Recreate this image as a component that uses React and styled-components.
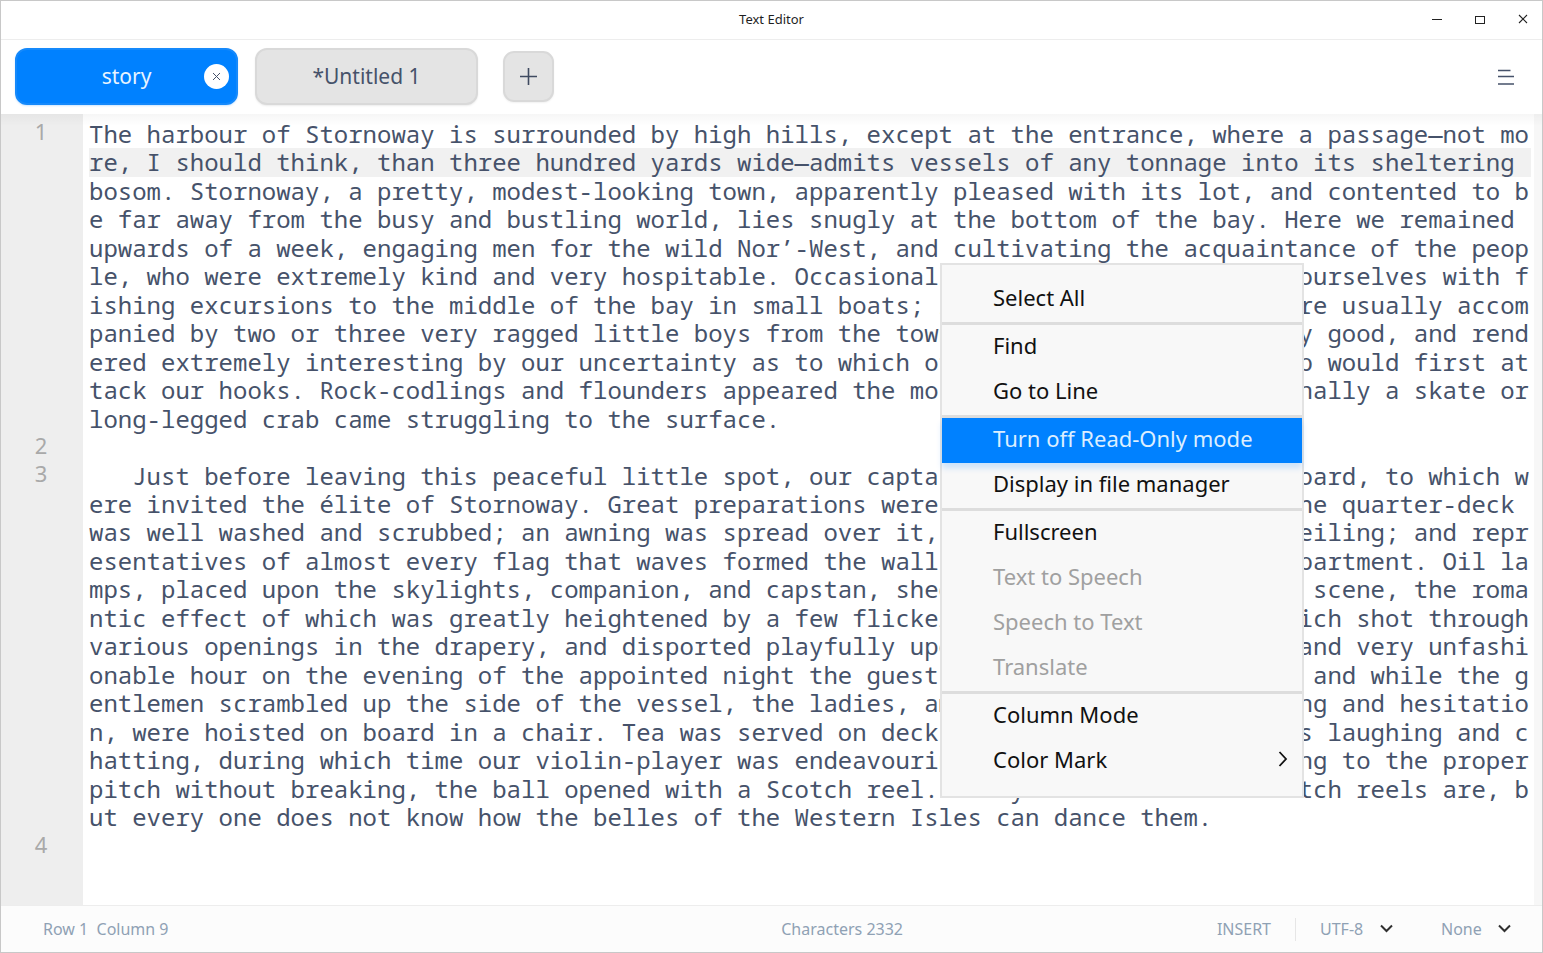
import React from "react";
import styled, { createGlobalStyle } from "styled-components";

const GlobalStyle = createGlobalStyle`
  *, *::before, *::after { box-sizing: border-box; }
  body {
    margin: 0;
    background: #ffffff;
    font-family: "Noto Sans", sans-serif;
  }
  button, select { font-family: inherit; margin: 0; }
`;

const Window = styled.div`
  position: relative;
  display: flex;
  flex-direction: column;
  min-height: 100vh;
  border: 1px solid #c8c8c8;
  background: #ffffff;
`;

const TitleBar = styled.header`
  display: grid;
  grid-template-columns: 1fr auto 1fr;
  align-items: center;
  height: 39px;
  border-bottom: 1px solid #ededed;
`;

const Title = styled.h1`
  grid-column: 2;
  margin: 0;
  padding-bottom: 2px;
  font-size: 13px;
  font-weight: 400;
  line-height: 16px;
  color: #1f1f1f;
`;

const WindowControls = styled.div`
  display: flex;
  justify-content: flex-end;
  gap: 19px;
  padding-right: 7px;
`;

const IconButton = styled.button`
  display: flex;
  align-items: center;
  justify-content: center;
  width: ${(p) => p.$size}px;
  height: ${(p) => p.$size}px;
  padding: 0;
  border: 0;
  background: transparent;
  color: ${(p) => p.$color || "#222222"};
`;

const TabBar = styled.nav`
  display: flex;
  align-items: center;
  height: 74px;
  padding: 0 23px 2px 14px;
`;

const TabSlot = styled.div`
  position: relative;
  width: 223px;
  margin-right: 17px;
`;

const Tab = styled.button`
  display: block;
  width: 100%;
  height: 57px;
  padding: 0;
  border: 2px solid ${(p) => (p.$active ? "#1589fb" : "#d9d9d9")};
  border-radius: 12px;
  background: ${(p) => (p.$active ? "#0081ff" : "#e4e4e4")};
  box-shadow: 0 1px 2px ${(p) => (p.$active ? "#0081ff33" : "#00000014")};
  color: ${(p) => (p.$active ? "#e8f4ff" : "#46526a")};
  font-size: 21px;
  line-height: 28px;
`;

const TabClose = styled.button`
  position: absolute;
  top: 16px;
  right: 9px;
  display: flex;
  align-items: center;
  justify-content: center;
  width: 25px;
  height: 25px;
  padding: 0;
  border: 0;
  border-radius: 50%;
  background: #ffffff;
  color: #46526a;
`;

const AddTab = styled.button`
  display: flex;
  align-items: center;
  justify-content: center;
  width: 51px;
  height: 51px;
  margin-left: 8px;
  margin-right: auto;
  padding: 0;
  border: 2px solid #d9d9d9;
  border-radius: 11px;
  background: #e4e4e4;
  box-shadow: 0 1px 2px #0000000f;
  color: #3f4a60;
`;

const Editor = styled.main`
  position: relative;
  flex: 1;
  display: grid;
  grid-template-columns: 82px 1fr 8px;
  background: #ffffff;
`;

const TopShade = styled.div`
  position: absolute;
  inset: 0 0 auto 0;
  height: 12px;
  background: linear-gradient(#00000009, #00000000);
  pointer-events: none;
`;

const Rows = styled.div`
  display: grid;
  grid-auto-rows: minmax(28px, 1fr);
  line-height: 28px;
`;

const Gutter = styled(Rows)`
  padding: 3px 0 47px;
  background: #eeeeee;
  color: #a9a9a9;
  font-size: 22px;
  text-align: center;
`;

const GutterCell = styled.span`
  padding-right: 2px;
`;

const Page = styled(Rows)`
  isolation: isolate;
  padding: 6px 3px 45px 6px;
  color: #46526a;
  font-family: "Noto Sans Mono", "Noto Mono", "DejaVu Sans Mono", "Liberation Mono", monospace;
  font-size: 24px;
  white-space: pre;
`;

/* The current line sits one layer down, so its band never covers the descenders above it. */
const Line = styled.div`
  z-index: ${(p) => (p.$current ? -1 : "auto")};
  background: ${(p) => (p.$current ? "#f1f1f1" : "transparent")};
`;

const ScrollTrack = styled.div`
  background: #f7f7f7;
`;

const StatusBar = styled.footer`
  display: grid;
  grid-template-columns: 17fr auto 14fr;
  align-items: center;
  height: 47px;
  padding: 0 31px 0 42px;
  border-top: 1px solid #ededed;
  background: #fcfcfc;
  color: #8fa1b4;
  font-size: 16px;
  line-height: 24px;
  white-space: pre;
`;

const StatusGroup = styled.div`
  display: flex;
  align-items: center;
  justify-content: flex-end;
`;

const Divider = styled.span`
  width: 1px;
  height: 23px;
  margin: 0 24px;
  background: #e6e6e6;
`;

const Picker = styled.label`
  display: flex;
  align-items: center;
  gap: 16px;
  & + & { margin-left: 48px; }
`;

const PickerSelect = styled.select`
  appearance: none;
  padding: 0;
  border: 0;
  background: transparent;
  color: #8fa1b4;
  font-size: 16px;
  line-height: 24px;
`;

const Menu = styled.div`
  position: absolute;
  top: 262px;
  right: 238px;
  width: 364px;
  display: flex;
  flex-direction: column;
  padding: 12px 0;
  border: 2px solid #e3e3e3;
  background: #f8f8f8;
`;

const MenuItem = styled.button`
  position: relative;
  display: flex;
  align-items: center;
  justify-content: space-between;
  height: 45px;
  padding: 0 14px 6px 51px;
  border: 0;
  background: ${(p) => (p.$selected ? "#0081ff" : "transparent")};
  box-shadow: ${(p) => (p.$selected ? "0 5px 6px #0081ff2e" : "none")};
  color: ${(p) => (p.$selected ? "#dceeff" : "#111111")};
  font-size: 22px;
  line-height: 30px;
  text-align: left;
  white-space: nowrap;
  &:disabled { color: #a0a0a0; }
`;

const MenuRule = styled.hr`
  width: 100%;
  height: 3px;
  margin: 0;
  border: 0;
  background: #dddddd;
`;

const lines = [
  [1, "The harbour of Stornoway is surrounded by high hills, except at the entrance, where a passage—not mo"],
  [null, "re, I should think, than three hundred yards wide—admits vessels of any tonnage into its sheltering "],
  [null, "bosom. Stornoway, a pretty, modest-looking town, apparently pleased with its lot, and contented to b"],
  [null, "e far away from the busy and bustling world, lies snugly at the bottom of the bay. Here we remained "],
  [null, "upwards of a week, engaging men for the wild Nor’-West, and cultivating the acquaintance of the peop"],
  [null, "le, who were extremely kind and very hospitable. Occasionally the passengers amused ourselves with f"],
  [null, "ishing excursions to the middle of the bay in small boats; in which excursions we were usually accom"],
  [null, "panied by two or three very ragged little boys from the town. Our sport was generally good, and rend"],
  [null, "ered extremely interesting by our uncertainty as to which of the denizens of the deep would first at"],
  [null, "tack our hooks. Rock-codlings and flounders appeared the most voracious, but occasionally a skate or"],
  [null, "long-legged crab came struggling to the surface."],
  [2, ""],
  [3, "   Just before leaving this peaceful little spot, our captain gave a grand ball on board, to which w"],
  [null, "ere invited the élite of Stornoway. Great preparations were made for the occasion. The quarter-deck "],
  [null, "was well washed and scrubbed; an awning was spread over it, which formed a capital ceiling; and repr"],
  [null, "esentatives of almost every flag that waves formed the walls of the large and airy apartment. Oil la"],
  [null, "mps, placed upon the skylights, companion, and capstan, shed a mellow light upon the scene, the roma"],
  [null, "ntic effect of which was greatly heightened by a few flickering rays of moonshine which shot through"],
  [null, "various openings in the drapery, and disported playfully upon the deck. At an early and very unfashi"],
  [null, "onable hour on the evening of the appointed night the guests arrived in detachments; and while the g"],
  [null, "entlemen scrambled up the side of the vessel, the ladies, amid a good deal of blushing and hesitatio"],
  [null, "n, were hoisted on board in a chair. Tea was served on deck; and after half an hour's laughing and c"],
  [null, "hatting, during which time our violin-player was endeavouring to coax his first string to the proper"],
  [null, "pitch without breaking, the ball opened with a Scotch reel. Every one knows what Scotch reels are, b"],
  [null, "ut every one does not know how the belles of the Western Isles can dance them."],
  [4, ""],
];
const currentLine = 1;

const menuGroups = [
  [{ label: "Select All" }],
  [{ label: "Find" }, { label: "Go to Line" }],
  [{ label: "Turn off Read-Only mode", selected: true }, { label: "Display in file manager" }],
  [
    { label: "Fullscreen" },
    { label: "Text to Speech", disabled: true },
    { label: "Speech to Text", disabled: true },
    { label: "Translate", disabled: true },
  ],
  [{ label: "Column Mode" }, { label: "Color Mark", submenu: true }],
];

function Stroke({ width, height, d, weight = 1, crisp }) {
  return (
    <svg
      width={width}
      height={height}
      viewBox={`0 0 ${width} ${height}`}
      fill="none"
      stroke="currentColor"
      strokeWidth={weight}
      shapeRendering={crisp ? "crispEdges" : "auto"}
      aria-hidden="true"
    >
      <path d={d} />
    </svg>
  );
}

function Chevron() {
  return (
    <svg width="13" height="11" viewBox="0 0 13 11" fill="none" stroke="#303030" strokeWidth="2" aria-hidden="true">
      <path d="M1 1.5 6.5 7 12 1.5" />
    </svg>
  );
}

export default function App() {
  return (
    <>
      <GlobalStyle />
      <Window>
        <TitleBar>
          <Title>Text Editor</Title>
          <WindowControls>
            <IconButton $size={24} aria-label="Minimize">
              <Stroke width={12} height={12} d="M1 5.5H11" crisp />
            </IconButton>
            <IconButton $size={24} aria-label="Maximize">
              <Stroke width={12} height={12} d="M1.5 2.5H10.5V9.5H1.5Z" crisp />
            </IconButton>
            <IconButton $size={24} aria-label="Close">
              <Stroke width={12} height={12} d="M2 1 10 9M10 1 2 9" weight={1.1} />
            </IconButton>
          </WindowControls>
        </TitleBar>

        <TabBar>
          <TabSlot>
            <Tab $active>story</Tab>
            <TabClose aria-label="Close story">
              <Stroke width={9} height={9} d="M1 1 8 8M8 1 1 8" />
            </TabClose>
          </TabSlot>
          <TabSlot>
            <Tab>*Untitled 1</Tab>
          </TabSlot>
          <AddTab aria-label="New tab">
            <Stroke width={19} height={19} d="M1 9.5H18M9.5 1V18" weight={1.6} />
          </AddTab>
          <IconButton $size={26} $color="#46526a" aria-label="Menu">
            <Stroke width={16} height={18} d="M0 3.5H12.5M0 9.5H16M0 17H16" weight={1.5} />
          </IconButton>
        </TabBar>

        <Editor>
          <Gutter>
            {lines.map(([number], i) => (
              <GutterCell key={i}>{number}</GutterCell>
            ))}
          </Gutter>
          <Page>
            {lines.map(([, text], i) => (
              <Line key={i} $current={i === currentLine}>{text}</Line>
            ))}
          </Page>
          <ScrollTrack />
          <TopShade />
        </Editor>

        <StatusBar>
          <span>{"Row 1  Column 9"}</span>
          <span>Characters 2332</span>
          <StatusGroup>
            <span>INSERT</span>
            <Divider />
            <Picker>
              <PickerSelect aria-label="Encoding"><option>UTF-8</option></PickerSelect>
              <Chevron />
            </Picker>
            <Picker>
              <PickerSelect aria-label="Highlighting"><option>None</option></PickerSelect>
              <Chevron />
            </Picker>
          </StatusGroup>
        </StatusBar>

        <Menu role="menu">
          {menuGroups.map((group, g) => (
            <React.Fragment key={g}>
              {g > 0 && <MenuRule />}
              {group.map((item) => (
                <MenuItem key={item.label} role="menuitem" $selected={item.selected} disabled={item.disabled}>
                  {item.label}
                  {item.submenu && <Stroke width={10} height={16} d="M1.5 1 8 8 1.5 15" weight={1.8} />}
                </MenuItem>
              ))}
            </React.Fragment>
          ))}
        </Menu>
      </Window>
    </>
  );
}
